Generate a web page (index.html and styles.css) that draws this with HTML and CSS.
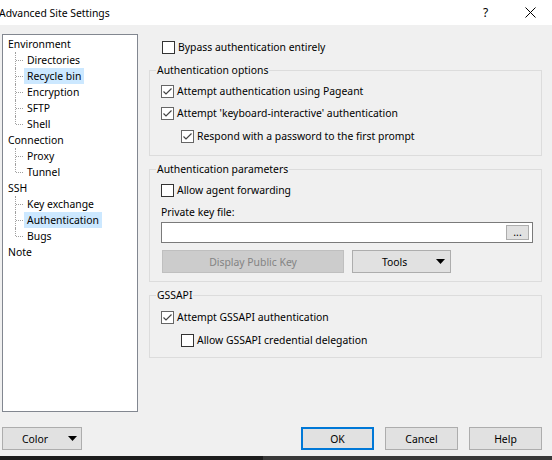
FILE: index.html
```html
<!DOCTYPE html>
<html lang="en">
<head>
    <meta charset="UTF-8">
    <title>Advanced Site Settings</title>
    <link rel="stylesheet" href="styles.css">
</head>
<body>
    <div class="titlebar">
        <span class="title">Advanced Site Settings</span>
        <div class="title-buttons">
            <span class="tb-btn help">?</span>
            <span class="tb-btn close">
                <svg width="11" height="11" viewBox="0 0 11 11"><path d="M0.5 0.5L10.5 10.5M10.5 0.5L0.5 10.5" stroke="#000" stroke-width="1" fill="none"/></svg>
            </span>
        </div>
    </div>

    <div class="main">
        <div class="tree">
            <ul>
                <li class="root">
                    <span class="label">Environment</span>
                    <ul class="children">
                        <li><span class="label">Directories</span></li>
                        <li><span class="label selected">Recycle bin</span></li>
                        <li><span class="label">Encryption</span></li>
                        <li><span class="label">SFTP</span></li>
                        <li><span class="label">Shell</span></li>
                    </ul>
                </li>
                <li class="root">
                    <span class="label">Connection</span>
                    <ul class="children">
                        <li><span class="label">Proxy</span></li>
                        <li><span class="label">Tunnel</span></li>
                    </ul>
                </li>
                <li class="root">
                    <span class="label">SSH</span>
                    <ul class="children">
                        <li><span class="label">Key exchange</span></li>
                        <li><span class="label selected">Authentication</span></li>
                        <li><span class="label">Bugs</span></li>
                    </ul>
                </li>
                <li class="root">
                    <span class="label">Note</span>
                </li>
            </ul>
        </div>

        <div class="settings">
            <div class="check-row top-check">
                <span class="box"></span>Bypass authentication entirely
            </div>

            <fieldset class="group first">
                <legend>Authentication options</legend>
                <div class="group-body">
                    <div class="check-row">
                        <span class="box checked"><svg width="11" height="11" viewBox="0 0 11 11"><path d="M1.5 5.5L4 8L9.5 2.5" stroke="#444" stroke-width="1.2" fill="none"/></svg></span>Attempt authentication using Pageant
                    </div>
                    <div class="check-row">
                        <span class="box checked"><svg width="11" height="11" viewBox="0 0 11 11"><path d="M1.5 5.5L4 8L9.5 2.5" stroke="#444" stroke-width="1.2" fill="none"/></svg></span>Attempt 'keyboard-interactive' authentication
                    </div>
                    <div class="check-row indent">
                        <span class="box checked"><svg width="11" height="11" viewBox="0 0 11 11"><path d="M1.5 5.5L4 8L9.5 2.5" stroke="#444" stroke-width="1.2" fill="none"/></svg></span>Respond with a password to the first prompt
                    </div>
                </div>
            </fieldset>

            <fieldset class="group">
                <legend>Authentication parameters</legend>
                <div class="group-body">
                    <div class="check-row">
                        <span class="box"></span>Allow agent forwarding
                    </div>
                    <div class="field-label">Private key file:</div>
                    <div class="file-field">
                        <button class="browse">...</button>
                    </div>
                    <div class="key-buttons">
                        <button class="btn disabled">Display Public Key</button>
                        <button class="btn menu tools">Tools <svg width="9" height="5" viewBox="0 0 9 5"><path d="M0 0H9L4.5 5Z" fill="#000"/></svg></button>
                    </div>
                </div>
            </fieldset>

            <fieldset class="group">
                <legend>GSSAPI</legend>
                <div class="group-body last">
                    <div class="check-row">
                        <span class="box checked"><svg width="11" height="11" viewBox="0 0 11 11"><path d="M1.5 5.5L4 8L9.5 2.5" stroke="#444" stroke-width="1.2" fill="none"/></svg></span>Attempt GSSAPI authentication
                    </div>
                    <div class="check-row indent">
                        <span class="box"></span>Allow GSSAPI credential delegation
                    </div>
                </div>
            </fieldset>
        </div>
    </div>

    <div class="footer">
        <button class="btn menu color">Color <svg width="9" height="5" viewBox="0 0 9 5"><path d="M0 0H9L4.5 5Z" fill="#000"/></svg></button>
        <button class="btn dialog ok">OK</button>
        <button class="btn dialog">Cancel</button>
        <button class="btn dialog">Help</button>
    </div>

    <div class="taskbar">
        <div class="taskbar-right"></div>
    </div>
</body>
</html>
```

FILE: styles.css
```css
* {
    margin: 0;
    padding: 0;
    box-sizing: border-box;
}

body {
    font-family: "Noto Sans", "Liberation Sans", sans-serif;
    font-size: 10.4px;
    color: #000;
    background: #f0f0f0;
    width: 552px;
    height: 460px;
    overflow: hidden;
    display: flex;
    flex-direction: column;
}

/* title bar */
.titlebar {
    height: 25px;
    background: #fff;
    display: flex;
    align-items: center;
    justify-content: space-between;
}

.title {
    margin-left: -1px;
}

.title-buttons {
    display: flex;
    height: 100%;
}

.tb-btn {
    width: 45px;
    display: flex;
    align-items: center;
    justify-content: center;
}

.tb-btn.help {
    font-size: 12px;
}

.tb-btn.close {
    width: 44px;
}

/* main area */
.main {
    display: flex;
    padding: 9px 10px 0 2px;
}

.tree {
    width: 136px;
    height: 378px;
    background: #fff;
    border: 1px solid #828790;
    padding-top: 1px;
}

.tree ul {
    list-style: none;
}

.tree .root {
    padding-left: 2px;
}

.tree .label {
    display: inline-block;
    height: 16px;
    line-height: 16px;
    padding: 0 3px;
}

.tree .label.selected {
    background: #cce8ff;
}

.children li {
    position: relative;
    padding-left: 19px;
}

.children li::before {
    content: "";
    position: absolute;
    left: 10px;
    top: 0;
    bottom: 0;
    border-left: 1px dotted #a0a0a0;
}

.children li:last-child::before {
    bottom: 8px;
}

.children li::after {
    content: "";
    position: absolute;
    left: 11px;
    top: 8px;
    width: 7px;
    border-top: 1px dotted #a0a0a0;
}

.settings {
    flex: 1;
    margin-left: 11px;
}

/* checkboxes */
.check-row {
    display: flex;
    align-items: center;
    height: 22px;
}

.top-check {
    height: 16px;
    margin: 5px 0 0 13px;
}

.box {
    width: 13px;
    height: 13px;
    flex: none;
    border: 1px solid #333;
    background: #fff;
    margin-right: 3px;
}

.box.checked {
    border-color: #666;
}

.box svg {
    display: block;
}

.indent {
    margin-left: 20px;
    margin-top: 1px;
}

/* groups */
.group {
    border: 1px solid #dcdcdc;
    margin-top: 5px;
    min-width: 0;
}

.group.first {
    margin-top: 7px;
}

.group legend {
    margin-left: 6px;
    padding: 0 1px;
    line-height: 16px;
}

.group-body {
    padding: 2px 8px 8px 11px;
}

.group-body.last {
    padding-top: 3px;
    padding-bottom: 6px;
}

.field-label {
    line-height: 16px;
    margin-top: 3px;
}

.file-field {
    margin-top: 2px;
    height: 21px;
    background: #fff;
    border: 1px solid #7a7a7a;
    display: flex;
    align-items: center;
    justify-content: flex-end;
    padding-right: 3px;
}

.browse {
    width: 23px;
    height: 15px;
    font: inherit;
    line-height: 11px;
    background: #e1e1e1;
    border: 1px solid #adadad;
    color: #000;
}

/* buttons */
.btn {
    height: 23px;
    font: inherit;
    color: #000;
    background: #e1e1e1;
    border: 1px solid #adadad;
    display: flex;
    align-items: center;
    justify-content: center;
}

.key-buttons {
    display: flex;
    gap: 8px;
    margin-top: 7px;
    padding-left: 1px;
}

.btn.disabled {
    width: 182px;
    background: #cccccc;
    border-color: #bfbfbf;
    color: #838383;
}

.btn.menu {
    justify-content: space-between;
}

.btn.tools {
    width: 99px;
    padding: 0 5px 0 29px;
}

.footer {
    display: flex;
    margin-top: 15px;
    padding: 0 10px 0 2px;
}

.btn.color {
    width: 80px;
    padding: 0 4px 0 19px;
    margin-right: auto;
}

.btn.dialog {
    width: 73px;
    margin-left: 11px;
}

.btn.ok {
    border: 2px solid #0078d7;
}

.taskbar {
    margin-top: auto;
    height: 4px;
    background: #1c1c1c;
    display: flex;
}

.taskbar-right {
    margin-left: 263px;
    flex: 1;
    background: #383838;
}
```
